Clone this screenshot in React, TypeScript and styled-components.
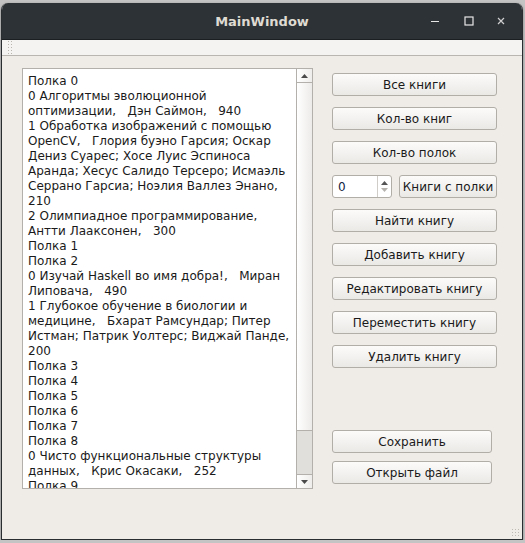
import React from 'react';
import styled, { createGlobalStyle } from 'styled-components';

const GlobalStyle = createGlobalStyle`
  html, body {
    margin: 0;
    padding: 0;
    background: #c4c4c4;
    font-family: "DejaVu Sans", "Liberation Sans", sans-serif;
  }
`;

const Window = styled.div`
  margin: 3px 2px 0 1px;
  height: 537px;
  display: flex;
  flex-direction: column;
  border-radius: 7px 7px 0 0;
  overflow: hidden;
  border: 1px solid #2a2d30;
  border-top: none;
  background: #efebe7;
  box-shadow: 0 1px 3px rgba(0, 0, 0, 0.35);
  box-sizing: border-box;
`;

const TitleBar = styled.div`
  height: 37px;
  flex: none;
  display: grid;
  grid-template-columns: 1fr auto 1fr;
  align-items: center;
  background: #2d3236;
  border-bottom: 1px solid #1c1f21;
  box-sizing: border-box;
`;

const Title = styled.div`
  grid-column: 2;
  color: #dfdbd2;
  font-weight: bold;
  font-size: 13px;
  padding-top: 1px;
`;

const Controls = styled.div`
  grid-column: 3;
  justify-self: end;
  display: flex;
  align-items: center;
  gap: 22px;
  padding-right: 16px;
  color: #e6e6e6;
`;

const ControlIcon = styled.svg<{ $space?: number }>`
  display: block;
  width: 10px;
  height: 10px;
  margin-right: ${p => p.$space ?? 0}px;
`;

const ToolBar = styled.div`
  height: 16px;
  flex: none;
  background: #f5f3f1;
  border-bottom: 1px solid #b9b5b0;
  box-sizing: border-box;
  display: flex;
  padding-left: 5px;
`;

const Grip = styled.div`
  width: 5px;
  height: 100%;
  background-image: radial-gradient(circle, #b8b4ae 0.8px, transparent 1px);
  background-size: 3px 3px;
`;

const Body = styled.div`
  flex: 1;
  display: flex;
  padding: 12px 0 0 20px;
  position: relative;
`;

const ListBox = styled.div`
  width: 291px;
  height: 421px;
  box-sizing: border-box;
  border: 1px solid #b3b0ab;
  background: #ffffff;
  display: flex;
`;

const ListText = styled.div`
  flex: 1;
  overflow: hidden;
  padding: 5px 4px 0 5px;
  font-size: 12px;
  line-height: 15px;
  color: #1a1a1a;
  white-space: pre-wrap;
`;

const ScrollBar = styled.div`
  width: 15px;
  flex: none;
  border-left: 1px solid #b3b0ab;
  display: flex;
  flex-direction: column;
  background: #e1dfdc;
`;

const ArrowButton = styled.div<{ $down?: boolean }>`
  height: 13px;
  flex: none;
  display: flex;
  align-items: center;
  justify-content: center;
  background: linear-gradient(to right, #ffffff, #eeedeb);
  ${p => (p.$down ? 'border-top: 1px solid #b3b0ab; margin-top: auto;' : 'border-bottom: 1px solid #b3b0ab;')}
`;

const Thumb = styled.div`
  height: 347px;
  flex: none;
  background: linear-gradient(to right, #ffffff, #ecebe9);
  border-bottom: 1px solid #b3b0ab;
`;

const RightColumn = styled.div`
  margin-left: 19px;
  padding-top: 5px;
  display: flex;
  flex-direction: column;
  gap: 11px;
  width: 165px;
`;

const Button = styled.button<{ $width?: number }>`
  height: 23px;
  width: ${p => (p.$width ? `${p.$width}px` : '100%')};
  flex: none;
  box-sizing: border-box;
  border: 1px solid #b1ada7;
  border-radius: 3px;
  background: linear-gradient(to bottom, #fcfbfa, #ebe9e6);
  font-family: "DejaVu Sans", "Liberation Sans", sans-serif;
  font-size: 12px;
  color: #1a1a1a;
  padding: 0;
  cursor: pointer;
`;

const SpinRow = styled.div`
  display: flex;
  gap: 7px;
  height: 23px;
  flex: none;

  & > button {
    flex: 1;
    width: auto;
  }
`;

const SpinBox = styled.div`
  width: 60px;
  flex: none;
  box-sizing: border-box;
  border: 1px solid #b1ada7;
  border-radius: 3px;
  background: #ffffff;
  display: flex;
  align-items: center;
`;

const SpinValue = styled.div`
  flex: 1;
  padding-left: 5px;
  font-size: 12px;
  color: #13233f;
`;

const SpinArrows = styled.div`
  width: 12px;
  height: 100%;
  border-left: 1px solid #d0cdc8;
  display: flex;
  flex-direction: column;
  align-items: center;
  justify-content: center;
  gap: 3px;
  margin-right: 1px;
`;

const BottomGroup = styled.div`
  margin-top: 51px;
  display: flex;
  flex-direction: column;
  gap: 8px;
`;

const ResizeGrip = styled.div`
  position: absolute;
  right: 2px;
  bottom: 2px;
  width: 9px;
  height: 9px;
  background-image: radial-gradient(circle, #bdb9b3 0.8px, transparent 1px);
  background-size: 3px 3px;
`;

const Triangle = ({ down, color }: { down?: boolean; color: string }) => (
  <svg width="7" height="4" viewBox="0 0 7 4">
    <polygon points={down ? '0,0 7,0 3.5,4' : '0,4 7,4 3.5,0'} fill={color} />
  </svg>
);

const lines = [
  'Полка 0',
  '0 Алгоритмы эволюционной оптимизации,   Дэн Саймон,   940',
  '1 Обработка изображений с помощью OpenCV,   Глория буэно Гарсия; Оскар Дениз Суарес; Хосе Луис Эспиноса Аранда; Хесус Салидо Терсеро; Исмаэль Серрано Гарсиа; Ноэлия Валлез Энано,   210',
  '2 Олимпиадное программирование,   Антти Лааксонен,   300',
  'Полка 1',
  'Полка 2',
  '0 Изучай Haskell во имя добра!,   Миран Липовача,   490',
  '1 Глубокое обучение в биологии и медицине,   Бхарат Рамсундар; Питер Истман; Патрик Уолтерс; Виджай Панде,   200',
  'Полка 3',
  'Полка 4',
  'Полка 5',
  'Полка 6',
  'Полка 7',
  'Полка 8',
  '0 Чисто функциональные структуры данных,   Крис Окасаки,   252',
  'Полка 9',
];

const topButtons = ['Все книги', 'Кол-во книг', 'Кол-во полок'];
const bookButtons = ['Найти книгу', 'Добавить книгу', 'Редактировать книгу', 'Переместить книгу', 'Удалить книгу'];

export default function App() {
  return (
    <>
      <GlobalStyle />
      <Window>
        <TitleBar>
          <Title>MainWindow</Title>
          <Controls>
            <ControlIcon viewBox="0 0 10 10" $space={2}>
              <line x1="1" y1="5.5" x2="9" y2="5.5" stroke="currentColor" strokeWidth="1" />
            </ControlIcon>
            <ControlIcon viewBox="0 0 10 10">
              <rect x="1" y="1" width="8" height="8" fill="none" stroke="currentColor" strokeWidth="1.2" />
            </ControlIcon>
            <ControlIcon viewBox="0 0 10 10">
              <path d="M2 2 L8 8 M8 2 L2 8" stroke="#cfcfcf" strokeWidth="1.2" />
            </ControlIcon>
          </Controls>
        </TitleBar>
        <ToolBar>
          <Grip />
        </ToolBar>
        <Body>
          <ListBox>
            <ListText>
              {lines.map(l => (
                <div key={l}>{l}</div>
              ))}
            </ListText>
            <ScrollBar>
              <ArrowButton>
                <Triangle color="#4a4a4a" />
              </ArrowButton>
              <Thumb />
              <ArrowButton $down>
                <Triangle down color="#4a4a4a" />
              </ArrowButton>
            </ScrollBar>
          </ListBox>
          <RightColumn>
            {topButtons.map(b => (
              <Button key={b}>{b}</Button>
            ))}
            <SpinRow>
              <SpinBox>
                <SpinValue>0</SpinValue>
                <SpinArrows>
                  <Triangle color="#555555" />
                  <Triangle down color="#b5b2ad" />
                </SpinArrows>
              </SpinBox>
              <Button>Книги с полки</Button>
            </SpinRow>
            {bookButtons.map(b => (
              <Button key={b}>{b}</Button>
            ))}
            <BottomGroup>
              <Button $width={160}>Сохранить</Button>
              <Button $width={160}>Открыть файл</Button>
            </BottomGroup>
          </RightColumn>
          <ResizeGrip />
        </Body>
      </Window>
    </>
  );
}
